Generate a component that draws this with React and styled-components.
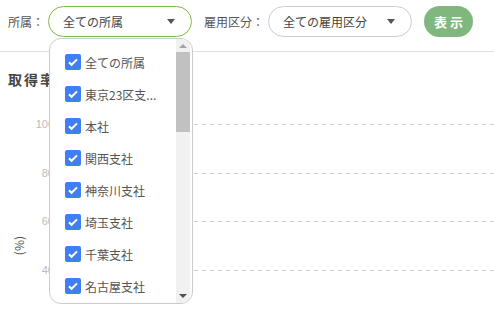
import React from 'react'
import styled, { createGlobalStyle } from 'styled-components'

const GlobalStyle = createGlobalStyle`
	html, body {
		margin: 0;
		padding: 0;
		background: #fff;
		font-family: 'Noto Sans CJK JP', 'Noto Sans', sans-serif;
		color: #555;
		overflow: hidden;
	}
`

const Page = styled.div`
	position: relative;
	width: 494px;
	height: 309px;
	overflow: hidden;
`

const Toolbar = styled.div`
	display: flex;
	align-items: center;
	height: 31px;
	padding: 6px 0 14px 8px;
	border-bottom: 1px solid #dde0e4;
`

const FilterGroup = styled.div`
	display: flex;
	align-items: center;
	gap: 4px;
	margin-right: 12px;
	position: relative;
`

const Label = styled.span`
	font-size: 12px;
	color: #555;
	white-space: nowrap;
`

const Select = styled.div`
	box-sizing: border-box;
	width: 144px;
	height: 31px;
	border: 1px solid ${(p) => (p.$open ? '#7dbb3c' : '#c9ccd1')};
	border-radius: 16px;
	display: flex;
	align-items: center;
	justify-content: space-between;
	padding: 0 16px 0 14px;
	font-size: 12px;
	color: #444;
	background: #fff;
`

const Caret = styled.span`
	width: 0;
	height: 0;
	border-left: 4px solid transparent;
	border-right: 4px solid transparent;
	border-top: 5px solid #555;
`

const ShowButton = styled.button`
	width: 49px;
	height: 31px;
	border: none;
	border-radius: 16px;
	background: #7fb77f;
	color: #fff;
	font-family: inherit;
	font-size: 13px;
	font-weight: bold;
	letter-spacing: 3px;
	padding: 0 0 0 3px;
`

const Dropdown = styled.div`
	position: absolute;
	top: 32px;
	left: 41px;
	box-sizing: border-box;
	width: 144px;
	height: 266px;
	border: 1px solid #c9ccd1;
	border-radius: 12px;
	background: #fff;
	display: flex;
	overflow: hidden;
	z-index: 5;
`

const OptionList = styled.div`
	flex: 1;
	display: flex;
	flex-direction: column;
	padding-top: 7px;
`

const Option = styled.div`
	display: flex;
	align-items: center;
	gap: 4px;
	height: 32px;
	padding-left: 15px;
	font-size: 12px;
	color: #555;
	white-space: nowrap;
`

const Check = styled.span`
	width: 16px;
	height: 16px;
	border-radius: 2px;
	background: #3f7ff2;
	display: flex;
	align-items: center;
	justify-content: center;
`

const Scrollbar = styled.div`
	width: 14px;
	margin: 0 2px 0 0;
	background: #f1f1f1;
	display: flex;
	flex-direction: column;
	align-items: center;
`

const Arrow = styled.span`
	width: 0;
	height: 0;
	border-left: 4px solid transparent;
	border-right: 4px solid transparent;
	${(p) => (p.$up ? 'border-bottom: 4px solid #a3a3a3;' : 'border-top: 4px solid #505050;')}
	margin: ${(p) => (p.$up ? '5px 0 4px' : 'auto 0 5px')};
`

const Thumb = styled.div`
	width: 14px;
	height: 80px;
	background: #c1c1c1;
`

const Chart = styled.div`
	display: flex;
	flex-direction: column;
	padding: 17px 0 0 8px;
`

const Title = styled.div`
	font-size: 14px;
	font-weight: bold;
	color: #444;
	letter-spacing: 2px;
	height: 20px;
`

const Plot = styled.div`
	display: flex;
	margin-top: 35px;
`

const AxisColumn = styled.div`
	width: 22px;
	display: flex;
	align-items: flex-start;
	justify-content: center;
	padding-top: 112px;
`

const AxisText = styled.span`
	font-size: 12px;
	line-height: 14px;
	color: #555;
	writing-mode: vertical-rl;
	transform: rotate(180deg);
`

const GridArea = styled.div`
	flex: 1;
	display: flex;
	flex-direction: column;
	gap: 47.5px;
`

const GridRow = styled.div`
	display: flex;
	align-items: center;
	height: 1px;
`

const Tick = styled.span`
	width: 24px;
	text-align: right;
	font-size: 11px;
	color: #bbbbbb;
	font-family: 'Liberation Sans', sans-serif;
	margin-right: 4px;
	line-height: 1px;
`

const DashLine = styled.div`
	flex: 1;
	height: 1px;
	background: repeating-linear-gradient(to right, #cfcfcf 0 4px, transparent 4px 8px);
`

const options = ['全ての所属', '東京23区支...', '本社', '関西支社', '神奈川支社', '埼玉支社', '千葉支社', '名古屋支社']
const ticks = ['100', '80', '60', '40']

const CheckIcon = () => (
	<svg width='12' height='12' viewBox='0 0 12 12'>
		<path d='M2 6.2l2.6 2.6L10 3.4' stroke='#fff' strokeWidth='2' fill='none' />
	</svg>
)

export default function App() {
	return (
		<Page>
			<GlobalStyle />
			<Toolbar>
				<FilterGroup>
					<Label>所属：</Label>
					<Select $open>
						全ての所属
						<Caret />
					</Select>
					<Dropdown>
						<OptionList>
							{options.map((o) => (
								<Option key={o}>
									<Check>
										<CheckIcon />
									</Check>
									{o}
								</Option>
							))}
						</OptionList>
						<Scrollbar>
							<Arrow $up />
							<Thumb />
							<Arrow />
						</Scrollbar>
					</Dropdown>
				</FilterGroup>
				<FilterGroup>
					<Label>雇用区分：</Label>
					<Select>
						全ての雇用区分
						<Caret />
					</Select>
				</FilterGroup>
				<ShowButton>表示</ShowButton>
			</Toolbar>
			<Chart>
				<Title>取得率</Title>
				<Plot>
					<AxisColumn>
						<AxisText>(%)</AxisText>
					</AxisColumn>
					<GridArea>
						{ticks.map((t) => (
							<GridRow key={t}>
								<Tick>{t}</Tick>
								<DashLine />
							</GridRow>
						))}
					</GridArea>
				</Plot>
			</Chart>
		</Page>
	)
}
